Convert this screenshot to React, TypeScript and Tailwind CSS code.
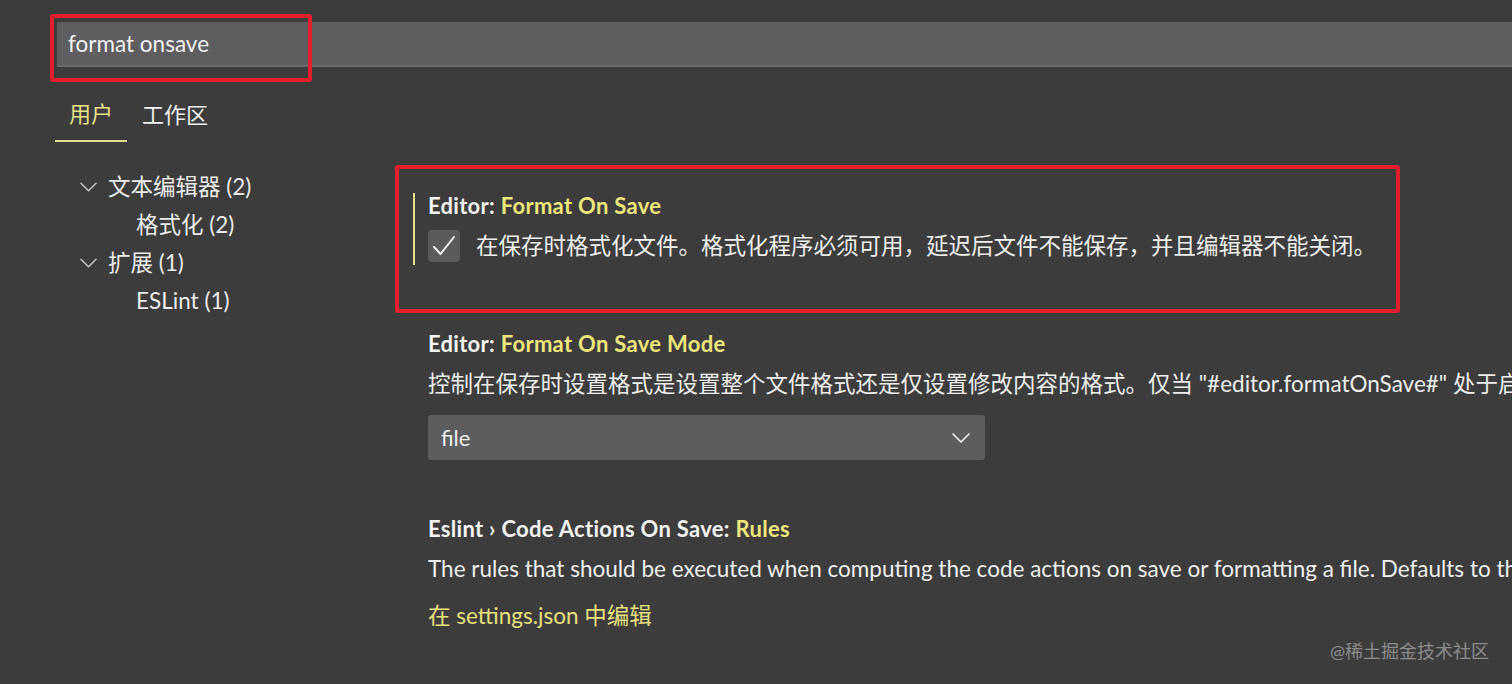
import React from "react";

const Chevron = ({ className }: { className?: string }) => (
  <svg className={className} viewBox="0 0 18 10" fill="none">
    <path d="M1 1 L9 9 L17 1" stroke="currentColor" strokeWidth="1.6" strokeLinecap="round" strokeLinejoin="round" />
  </svg>
);

const TreeRow = ({ indent, chevron, label }: { indent: boolean; chevron?: boolean; label: string }) => (
  <div className={"flex h-[38px] items-center " + (indent ? "pl-[136px]" : "pl-[80px]")}>
    {chevron && <Chevron className="mr-[11px] h-[10px] w-[17px] text-[#c4c4c4]" />}
    <span className="text-[#ececec]">{label}</span>
  </div>
);

export default function App() {
  return (
    <div
      className="relative h-[684px] w-[1512px] overflow-hidden bg-[#3c3c3c] text-[22.5px] text-[#efefef]"
      style={{ fontFamily: 'Lato, "Noto Sans CJK SC", sans-serif' }}
    >
      {/* search */}
      <div className="pl-[57px] pt-[22px]">
        <div className="flex h-[45px] items-center border-b-[2px] border-[#6a696c] bg-[#5e5d60] pl-[11px] text-[22.5px] text-[#f2f2f2]">
          format onsave
        </div>
      </div>

      {/* tabs */}
      <div className="mt-[20px] flex pl-[55px] text-[22px]">
        <div className="flex h-[55px] items-center border-b-[2px] border-[#e3dc8a] px-[14px] text-[#e8e088]">用户</div>
        <div className="flex h-[55px] items-center pl-[15px] text-[#efefef]">工作区</div>
      </div>

      {/* main */}
      <div className="mt-[26px] flex">
        <div className="w-[413px] shrink-0">
          <TreeRow indent={false} chevron label="文本编辑器 (2)" />
          <TreeRow indent label="格式化 (2)" />
          <TreeRow indent={false} chevron label="扩展 (1)" />
          <TreeRow indent label="ESLint (1)" />
        </div>

        <div className="min-w-0 flex-1 overflow-hidden whitespace-nowrap">
          {/* setting 1 */}
          <div className="mt-[25px] border-l-[2px] border-[#e6df8a] pb-[3px] pl-[13px]">
            <div className="h-[25px] text-[22px] font-bold leading-[25px] tracking-[0.3px]">
              <span className="text-[#f4f4f4]">Editor: </span>
              <span className="text-[#efe67c]">Format On Save</span>
            </div>
            <div className="mt-[12px] flex h-[32px] items-center">
              <div className="flex h-[32px] w-[32px] shrink-0 items-center justify-center rounded-[4px] bg-[#5b5a5d]">
                <svg viewBox="0 0 32 32" className="h-[32px] w-[32px]" fill="none">
                  <path d="M6 17 L12.5 24 L26 7" stroke="#f4f4f4" strokeWidth="2" strokeLinecap="round" strokeLinejoin="round" />
                </svg>
              </div>
              <span className="ml-[16px]">在保存时格式化文件。格式化程序必须可用，延迟后文件不能保存，并且编辑器不能关闭。</span>
            </div>
          </div>

          {/* setting 2 */}
          <div className="mt-[66px] border-l-[2px] border-transparent pl-[13px]">
            <div className="h-[26px] text-[22px] font-bold leading-[26px] tracking-[0.3px]">
              <span className="text-[#f4f4f4]">Editor: </span>
              <span className="text-[#efe67c]">Format On Save Mode</span>
            </div>
            <div className="mt-[14px] h-[26px] overflow-hidden leading-[26px]">
              控制在保存时设置格式是设置整个文件格式还是仅设置修改内容的格式。仅当 "#editor.formatOnSave#" 处于启用状态时适用。
            </div>
            <div className="mt-[18px] flex h-[45px] w-[557px] items-center justify-between rounded-[3px] bg-[#5d5c5f] pl-[13px] pr-[15px] text-[22px]">
              <span>file</span>
              <Chevron className="h-[10px] w-[18px] text-[#f2f2f2]" />
            </div>
          </div>

          {/* setting 3 */}
          <div className="mt-[56px] border-l-[2px] border-transparent pl-[13px]">
            <div className="h-[26px] text-[22px] font-bold leading-[26px] tracking-[0.3px]">
              <span className="text-[#f4f4f4]">Eslint › Code Actions On Save: </span>
              <span className="text-[#efe67c]">Rules</span>
            </div>
            <div className="mt-[14px] h-[26px] overflow-hidden leading-[26px]">
              The rules that should be executed when computing the code actions on save or formatting a file. Defaults to the rules configured via your ESLint configuration
            </div>
            <div className="mt-[21px] h-[26px] leading-[26px] text-[#e9e07e]">在 settings.json 中编辑</div>
          </div>
        </div>
      </div>

      {/* annotation boxes */}
      <div className="pointer-events-none absolute left-[50px] top-[14px] h-[68px] w-[262px] rounded-[3px] border-[4px] border-[#e21f2a]" />
      <div className="pointer-events-none absolute left-[395px] top-[165px] h-[148px] w-[1005px] rounded-[3px] border-[4px] border-[#e21f2a]" />

      {/* watermark */}
      <div className="absolute left-[1330px] top-[638px] text-[18px] text-[#8c8c8c]">@稀土掘金技术社区</div>
    </div>
  );
}
